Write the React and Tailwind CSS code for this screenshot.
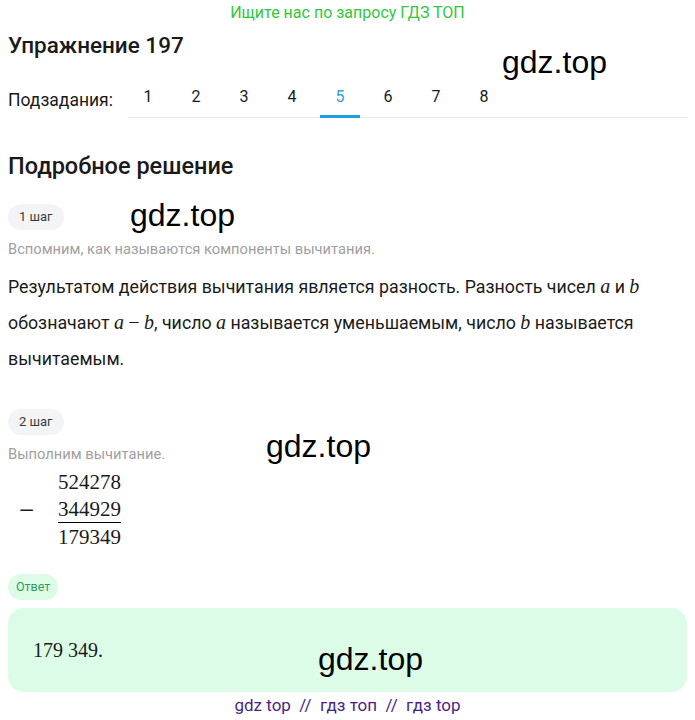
import React from 'react';

const tabs = ['1', '2', '3', '4', '5', '6', '7', '8'];

const Watermark = ({ className }) => (
  <div className={`absolute text-[32px] leading-none text-black font-['Liberation_Sans',Arial,sans-serif] pointer-events-none ${className}`}>
    gdz.top
  </div>
);

const Pill = ({ children, green }) => (
  <span
    className={`inline-flex items-center h-[26px] rounded-full ${
      green ? 'px-[8px] text-[12.5px] bg-[#dcfce7] text-[#2f9e5a]' : 'px-[11px] text-[13px] bg-[#f3f4f6] text-[#3a3a3a]'
    }`}
  >
    {children}
  </span>
);

// inline math, KaTeX-like
const M = ({ children, upright }) => (
  <span className={`font-['Liberation_Serif',serif] text-[20px] leading-[20px] ${upright ? '' : 'italic'}`}>{children}</span>
);

export default function App() {
  return (
    <div className="relative w-[695px] h-[720px] bg-white overflow-hidden font-['Roboto','Noto_Sans',sans-serif] text-[#1a1a1a]">
      <div className="h-[25px] flex items-center justify-center text-[16px] text-[#2fc83c]">
        Ищите нас по запросу ГДЗ ТОП
      </div>

      <div className="px-2">
        <h1 className="mt-[8px] text-[22.5px] font-medium leading-[24px]">Упражнение 197</h1>

        <div className="mt-[30px] flex items-end">
          <div className="w-[120px] text-[17.5px] pb-[8px] leading-[20px]">Подзадания:</div>
          <div className="flex-1 flex gap-2 border-b border-[#e5e7eb]">
            {tabs.map((t) => (
              <div
                key={t}
                className={`w-10 text-center text-[16px] leading-[20px] pb-[8px] border-b-[3px] -mb-px ${
                  t === '5' ? 'text-[#3b9bd0] border-[#1ea0dc]' : 'border-transparent'
                }`}
              >
                {t}
              </div>
            ))}
          </div>
        </div>

        <h2 className="mt-[36px] text-[23.5px] font-medium leading-[24px]">Подробное решение</h2>

        <div className="mt-[26px]">
          <Pill>1 шаг</Pill>
        </div>
        <p className="mt-[9px] text-[14.7px] text-[#a0a0a0] leading-[20px]">
          Вспомним, как называются компоненты вычитания.
        </p>
        <p className="mt-[10px] text-[17.8px] leading-[36px]">
          Результатом действия вычитания является разность. Разность чисел <M>a</M> и <M>b</M>{' '}
          обозначают <M>a</M> <M upright>−</M> <M>b</M>, число <M>a</M> называется
          уменьшаемым, число <M>b</M> называется вычитаемым.
        </p>

        <div className="mt-[32px]">
          <Pill>2 шаг</Pill>
        </div>
        <p className="mt-[9px] text-[14.7px] text-[#a0a0a0] leading-[20px]">Выполним вычитание.</p>

        <div className="mt-[5px] flex items-center font-['Liberation_Serif',serif] text-[21px] leading-[27px]">
          <div className="w-[50px] pl-[11px] text-[27px] leading-[27px]">−</div>
          <div className="flex flex-col">
            <span>524278</span>
            <span className="border-b border-black leading-[26px] mb-[1px]">344929</span>
            <span>179349</span>
          </div>
        </div>

        <div className="mt-[23px]">
          <Pill green>Ответ</Pill>
        </div>
        <div className="mt-[8px] h-[84px] rounded-[16px] bg-[#dcfce7] px-[25px] pt-[27px]">
          <span className="font-['Liberation_Serif',serif] text-[20px]">179 349.</span>
        </div>

        <div className="mt-px text-center text-[17px] text-[#4b1f86]">
          gdz top&nbsp; //&nbsp; гдз топ&nbsp; //&nbsp; гдз top
        </div>
      </div>

      <Watermark className="left-[502px] top-[46px]" />
      <Watermark className="left-[130px] top-[199px]" />
      <Watermark className="left-[266px] top-[430px]" />
      <Watermark className="left-[318px] top-[643px]" />
    </div>
  );
}
